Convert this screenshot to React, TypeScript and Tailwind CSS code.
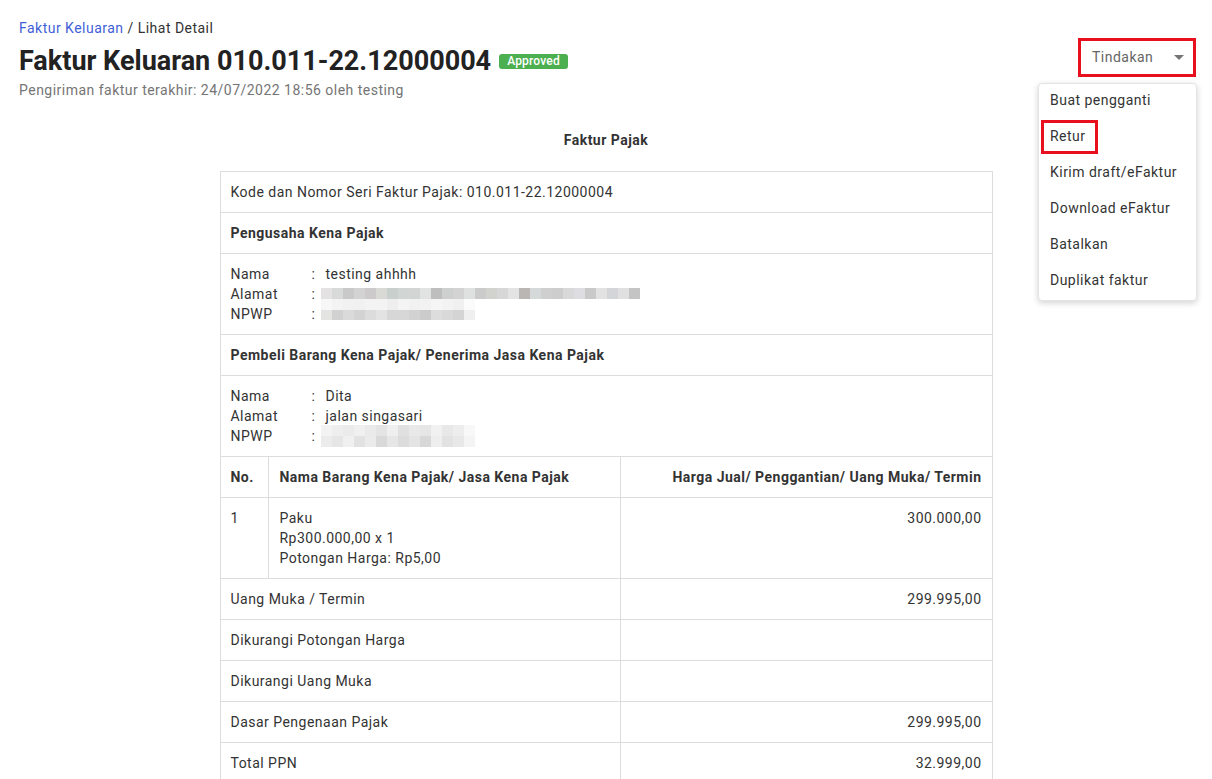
import React from "react";

const row1 = ["#e4e2e2","#d8dad9","#c9c9c9","#d3d3d3","#cccaca","#d9d9d6","#c9cfcc","#d1d5d4","#d3d4d4","#e1e3e3","#bebebe","#ced0cf","#d3d3d3","#dfe1e0","#cbcbcb","#d2d3cf","#d7d7d7","#e3e3e3","#b9b6b3","#d5d9d9","#cfcfcf","#cdcdcd","#d9d9d9","#dedee2","#c9c9c9","#e2e2e2","#d4d5d8","#e0e0e0","#c4c4c4"];
const row1b = ["#f7f7f7","#f3f3f3","#f1f1f1","#f1f1f1","#f3f3f3","#f3f3f3","#eeeeee","#f4f4f4","#f1f1f1","#f2f2f2","#f5f5f5","#f3f3f3","#f0f0f0","#fbfbfb"];
const rowNpwp = ["#e4e5e2","#d1d1d1","#dadada","#d3d3d3","#dcdcdc","#e2e3e2","#d7d7d7","#d7d7d7","#d2d2d2","#cbcbcb","#dddddd","#d9d9d9","#d4d4d4","#efefef"];
const rowNpwp2a = ["#ececec","#e6e6e6","#f0f0f0","#e2e2e2","#ebebeb","#d9d9d9","#e6e6e6","#dcdcdc","#e4e4e4","#d8d8d8","#eeeeee","#e2e2e2","#e8e8e8","#f4f4f4"];
const rowNpwp2b = ["#f3f3f3","#eeeeee","#ebebeb","#f0f0f0","#eaeaea","#e4e4e4","#efefef","#e0e0e0","#e9e9e9","#e6e6e6","#f1f1f1","#e8e8e8","#ededed","#f8f8f8"];

function Blocks({ colors }: { colors: string[] }) {
  return (
    <div className="flex h-[11px]">
      {colors.map((c, i) => (
        <div key={i} className="w-[11px] h-[11px]" style={{ backgroundColor: c }} />
      ))}
    </div>
  );
}

function InfoLine({ label, children }: { label: string; children: React.ReactNode }) {
  return (
    <div className="flex h-5 items-center">
      <div className="w-[81px] shrink-0">{label}</div>
      <div className="w-[14px] shrink-0">:</div>
      <div className="flex-1">{children}</div>
    </div>
  );
}

const td = "border border-[#dddddd] px-[10px] py-[10px] leading-5 align-top";

export default function App() {
  const menu = ["Buat pengganti", "Retur", "Kirim draft/eFaktur", "Download eFaktur", "Batalkan", "Duplikat faktur"];
  return (
    <div
      className="relative min-h-[779px] bg-white text-[14px] text-[#333333] tracking-[0.48px]"
      style={{ fontFamily: "Roboto, 'Noto Sans', sans-serif" }}
    >
      <div className="px-[19px] pt-[18px]">
        <div className="flex items-start justify-between">
          <div>
            <div className="leading-5">
              <span className="text-[#3f5fd8]">Faktur Keluaran</span>
              <span className="text-[#333333]"> / Lihat Detail</span>
            </div>
            <div className="mt-[6px] flex items-center gap-[8px]">
              <h1 className="text-[27px] font-bold leading-[34px] text-[#222222] tracking-normal">
                Faktur Keluaran 010.011-22.12000004
              </h1>
              <span className="rounded-[3px] bg-[#4caf50] px-[8px] text-[12px] font-medium leading-[15px] text-white tracking-[0.2px]">
                Approved
              </span>
            </div>
            <div className="mt-[2px] leading-5 text-[#757575]">
              Pengiriman faktur terakhir: 24/07/2022 18:56 oleh testing
            </div>
          </div>
          <div className="mt-[20px] mr-[-3px]">
            <div className="flex h-[39px] w-[118px] items-center justify-between border-[3px] border-[#e8101e] bg-white pl-[11px] pr-[9px] text-[#666666]">
              <span>Tindakan</span>
              <svg width="10" height="5" viewBox="0 0 10 5">
                <path d="M0 0 L10 0 L5 5 Z" fill="#757575" />
              </svg>
            </div>
          </div>
        </div>

        <div className="mt-[30px] text-center font-bold leading-5 text-[#333333]">Faktur Pajak</div>

        <table className="mx-auto mt-[21px] w-[773px] border-collapse">
          <colgroup>
            <col className="w-[49px]" />
            <col className="w-[352px]" />
            <col className="w-[372px]" />
          </colgroup>
          <tbody>
            <tr>
              <td colSpan={3} className={td}>Kode dan Nomor Seri Faktur Pajak: 010.011-22.12000004</td>
            </tr>
            <tr>
              <td colSpan={3} className={td + " font-bold"}>Pengusaha Kena Pajak</td>
            </tr>
            <tr>
              <td colSpan={3} className={td}>
                <InfoLine label="Nama">testing ahhhh</InfoLine>
                <InfoLine label="Alamat">
                  <div className="relative -ml-[5px] h-5">
                    <div className="absolute top-[4px] left-0">
                      <Blocks colors={row1} />
                      <Blocks colors={row1b} />
                    </div>
                  </div>
                </InfoLine>
                <InfoLine label="NPWP">
                  <div className="-ml-[5px] pt-[1px]">
                    <Blocks colors={rowNpwp} />
                  </div>
                </InfoLine>
              </td>
            </tr>
            <tr>
              <td colSpan={3} className={td + " font-bold"}>Pembeli Barang Kena Pajak/ Penerima Jasa Kena Pajak</td>
            </tr>
            <tr>
              <td colSpan={3} className={td}>
                <InfoLine label="Nama">Dita</InfoLine>
                <InfoLine label="Alamat">jalan singasari</InfoLine>
                <InfoLine label="NPWP">
                  <div className="-ml-[5px] flex flex-col">
                    <Blocks colors={rowNpwp2b} />
                    <Blocks colors={rowNpwp2a} />
                  </div>
                </InfoLine>
              </td>
            </tr>
            <tr className="font-bold">
              <td className={td}>No.</td>
              <td className={td}>Nama Barang Kena Pajak/ Jasa Kena Pajak</td>
              <td className={td + " text-right"}>Harga Jual/ Penggantian/ Uang Muka/ Termin</td>
            </tr>
            <tr>
              <td className={td}>1</td>
              <td className={td}>
                <div>Paku</div>
                <div>Rp300.000,00 x 1</div>
                <div>Potongan Harga: Rp5,00</div>
              </td>
              <td className={td + " text-right"}>300.000,00</td>
            </tr>
            <tr>
              <td colSpan={2} className={td}>Uang Muka / Termin</td>
              <td className={td + " text-right"}>299.995,00</td>
            </tr>
            <tr>
              <td colSpan={2} className={td}>Dikurangi Potongan Harga</td>
              <td className={td + " text-right"}>&nbsp;</td>
            </tr>
            <tr>
              <td colSpan={2} className={td}>Dikurangi Uang Muka</td>
              <td className={td + " text-right"}>&nbsp;</td>
            </tr>
            <tr>
              <td colSpan={2} className={td}>Dasar Pengenaan Pajak</td>
              <td className={td + " text-right"}>299.995,00</td>
            </tr>
            <tr>
              <td colSpan={2} className={td}>Total PPN</td>
              <td className={td + " text-right"}>32.999,00</td>
            </tr>
          </tbody>
        </table>
      </div>

      <div className="absolute left-[1038px] top-[83px] w-[159px] rounded-[4px] border border-[#e4e4e4] bg-white shadow-[0_2px_6px_rgba(0,0,0,0.18)]">
        {menu.map((m) => (
          <div key={m} className="flex h-[36px] items-center px-[11px] pb-[3px] text-[#333333]">
            {m === "Retur" ? (
              <span className="-mx-[9px] flex h-[34px] items-center border-[3px] border-[#e8101e] pl-[6px] pr-[9px]">{m}</span>
            ) : (
              m
            )}
          </div>
        ))}
      </div>
    </div>
  );
}
